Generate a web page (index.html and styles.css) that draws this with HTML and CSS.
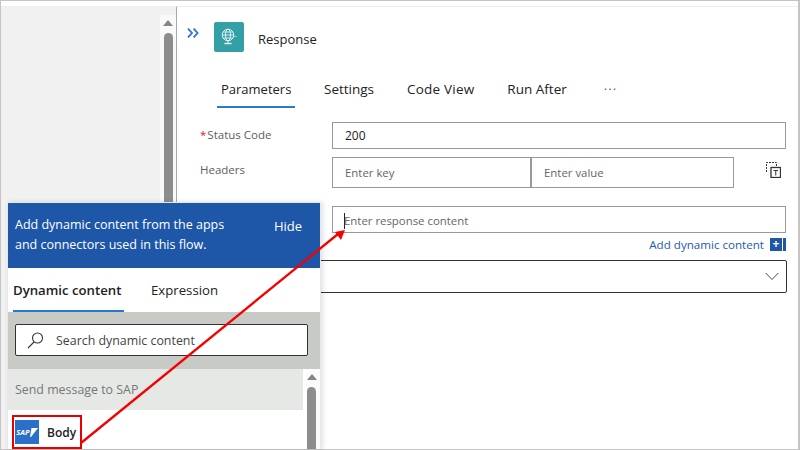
FILE: index.html
```html
<!DOCTYPE html>
<html lang="en">
<head>
	<meta charset="UTF-8">
	<title>Response</title>
	<link rel="stylesheet" href="styles.css">
</head>
<body>
	<div class="frame">
		<div class="sidebar">
			<div class="scroll_strip">
				<div class="scroll_up"></div>
				<div class="scroll_thumb"></div>
			</div>
		</div>

		<div class="main">
			<div class="head">
				<svg class="collapse" width="12" height="10" viewBox="0 0 12 10"><path d="M1 .6 5 5 1 9.400M6.600 .6 10.600 5 6.600 9.400" fill="none" stroke="#2f6fe0" stroke-width="1.800"/></svg>
				<div class="action_icon">
					<svg width="18" height="18" viewBox="0 0 18 18" fill="none" stroke="#fff" stroke-width=".8">
						<circle cx="8" cy="7" r="5.800"/>
						<ellipse cx="8" cy="7" rx="2.500" ry="5.800"/>
						<path d="M2.200 7h11.600M3 4h10M3 10h10M8 13v2"/>
						<path d="M4.500 15.500h7" stroke-width="1.400"/>
						<path d="M13.500 8.500h3" opacity=".6"/>
					</svg>
				</div>
				<span class="action_title">Response</span>
			</div>

			<ul class="tabs">
				<li class="tab tab_on">Parameters</li>
				<li class="tab">Settings</li>
				<li class="tab tab_code">Code View</li>
				<li class="tab">Run After</li>
				<li class="tab tab_more">···</li>
			</ul>

			<div class="row row_status">
				<label class="label"><span class="req">*</span>Status Code</label>
				<div class="field field_value">200</div>
			</div>
			<div class="row row_headers">
				<label class="label">Headers</label>
				<div class="pair">
					<div class="field pair_key">Enter key</div>
					<div class="field pair_val">Enter value</div>
				</div>
				<svg class="switch_icon" width="15" height="16" viewBox="0 0 15 16" fill="none" stroke="#333">
					<path d="M.5 10V.5H10.500V5" stroke-dasharray="2 1"/>
					<rect x="5" y="5.500" width="9.500" height="10" fill="#fff" stroke-width="1.300"/>
					<path d="M7.500 8.500h4.500M9.750 8.500v5"/>
				</svg>
			</div>
			<div class="row row_body">
				<div class="label"></div>
				<div class="field field_body"><span class="caret"></span>Enter response content</div>
			</div>
			<div class="add_dynamic">
				<span>Add dynamic content</span>
				<span class="add_plus">+</span>
				<span class="add_bar"></span>
			</div>
			<div class="dropdown">
				<svg width="14" height="9" viewBox="0 0 14 9"><path d="M.7 1 7 7.500 13.300 1" fill="none" stroke="#444" stroke-width="1"/></svg>
			</div>
		</div>
	</div>

	<div class="dyn_panel">
		<div class="dyn_head">
			<p>Add dynamic content from the apps and connectors used in this flow.</p>
			<span class="dyn_hide">Hide</span>
		</div>
		<div class="dyn_tabs">
			<span class="dyn_tab dyn_tab_on">Dynamic content</span>
			<span class="dyn_tab">Expression</span>
		</div>
		<div class="dyn_search">
			<div class="search_box">
				<svg width="17" height="17" viewBox="0 0 17 17" fill="none" stroke="#333" stroke-width="1.100"><circle cx="10.500" cy="6" r="5"/><path d="M7 10 1 16"/></svg>
				<span>Search dynamic content</span>
			</div>
		</div>
		<div class="dyn_list">
			<div class="dyn_items">
				<div class="dyn_section">Send message to SAP</div>
				<div class="dyn_item">
					<div class="sap_icon">
						<span>SAP</span>
						<svg width="8" height="9" viewBox="0 0 8 9"><path d="M1.500 0H8L1 9H0Z" fill="#fff"/></svg>
					</div>
					<b>Body</b>
				</div>
			</div>
			<div class="dyn_scroll">
				<div class="scroll_up"></div>
				<div class="scroll_thumb"></div>
			</div>
		</div>
	</div>

	<!-- callout over the screenshot -->
	<div class="callout_box"></div>
	<svg class="callout_arrow" width="800" height="450" viewBox="0 0 800 450">
		<path d="M81 443 338 234" stroke="#f50000" stroke-width="2.300" fill="none"/>
		<path d="M345 230 335 232 341 240Z" fill="#f50000"/>
	</svg>
</body>
</html>
```

FILE: styles.css
```css
*{
	margin: 0;
	padding: 0;
	box-sizing: border-box;
}
html,body{
	width: 800px;
	height: 450px;
	overflow: hidden;
	background: #fff;
}
body{
	font-family: "Open Sans", "Noto Sans", sans-serif;
	font-size: 12px;
	color: #222;
	position: relative;
}
ul{
	list-style: none;
}

.frame{
	width: 800px;
	height: 450px;
	border: 1px solid #c4c4c4;
	border-width: 1px 2px 1px 1px;
	display: flex;
}

/* left column */
.sidebar{
	width: 176px;
	margin-top: 5px;
	background: #f1f1f1;
	border-right: 1px solid #a9a9a9;
	border-top: 1px solid #eee;
	padding-top: 8px;
	display: flex;
	justify-content: flex-end;
}
.scroll_strip{
	width: 16px;
	background: #f9f9f9;
	padding: 5px 3px 0;
	display: flex;
	flex-direction: column;
}
.scroll_up{
	width: 0;
	height: 0;
	margin: 0 auto;
	flex: none;
	border-left: 5px solid transparent;
	border-right: 5px solid transparent;
	border-bottom: 6px solid #858585;
}
.scroll_thumb{
	width: 9px;
	flex: 1;
	margin: 7px auto 0;
	background: #8c8c8c;
	border-radius: 5px 5px 0 0;
}

/* right column */
.main{
	flex: 1;
	margin-top: 5px;
	border-top: 1px solid #f0f0f0;
	padding-top: 15px;
}
.head{
	display: flex;
	height: 30px;
	padding-left: 10px;
}
.collapse{
	margin-top: 6px;
}
.action_icon{
	width: 30px;
	height: 30px;
	margin-left: 15px;
	background: #33a0a5;
	border-radius: 2px;
	display: flex;
	align-items: center;
	justify-content: center;
}
.action_title{
	margin-left: 14px;
	font-size: 13px;
	line-height: 34px;
	color: #222;
}
.tabs{
	display: flex;
	margin: 18px 0 0 40px;
	font-size: 13.500px;
	height: 38px;
}
.tab{
	padding: 9px 4px 0;
	margin-right: 25px;
	line-height: 20px;
}
.tab_on{
	width: 78px;
	font-size: 13px;
	border-bottom: 2px solid #2b78d0;
}
.tab_code{
	letter-spacing: .2px;
}
.tab_more{
	margin-left: 4px;
	color: #666;
	letter-spacing: 1px;
}

.row{
	display: flex;
	padding-left: 23px;
}
.label{
	width: 132px;
	flex: none;
	color: #605e5c;
	font-size: 11.500px;
	line-height: 18px;
}
.req{
	color: #e81123;
	margin-right: 1px;
}
.field{
	border: 1px solid #999;
	color: #666;
	font-size: 11.400px;
	padding-left: 12px;
	display: flex;
	align-items: center;
}
.row_status{
	margin-top: 14px;
}
.field_value{
	width: 454px;
	height: 27px;
	color: #222;
	font-size: 12px;
}
.row_headers{
	margin-top: 8px;
}
.row_headers .label{
	padding-top: 4px;
}
.row_status .label{
	padding-top: 4px;
}
.pair{
	display: flex;
	width: 402px;
	height: 31px;
}
.pair_key{
	width: 198px;
	border-right: 0;
}
.pair_val{
	flex: 1;
	border-left-width: 2px;
}
.switch_icon{
	margin: 5px 0 0 32px;
}
.row_body{
	margin-top: 18px;
}
.field_body{
	width: 454px;
	height: 27px;
	padding: 2px 0 0 11px;
}
.caret{
	width: 1px;
	height: 16px;
	background: #222;
	margin-right: -1px;
}
.add_dynamic{
	display: flex;
	justify-content: flex-end;
	align-items: center;
	width: 609px;
	height: 14px;
	margin-top: 4px;
	color: #2559b5;
	font-size: 11.600px;
}
.add_plus{
	width: 12px;
	height: 13px;
	margin-left: 6px;
	background: #1e56a8;
	color: #fff;
	font-size: 12px;
	font-weight: 700;
	line-height: 12px;
	text-align: center;
}
.add_bar{
	width: 3px;
	height: 13px;
	margin-left: 1px;
	background: #1e56a8;
}
.dropdown{
	width: 587px;
	height: 33px;
	margin: 9px 0 0 23px;
	border: 1px solid #333;
	border-radius: 2px;
	display: flex;
	align-items: center;
	justify-content: flex-end;
	padding-right: 7px;
}

/* dynamic content popup, sits over the form */
.dyn_panel{
	position: absolute;
	left: 7px;
	top: 202px;
	width: 314px;
	height: 247px;
	background: #fff;
	border: 1px solid #e8e8e8;
	border-bottom: 0;
	box-shadow: 2px 0 5px rgba(0,0,0,.12);
	overflow: hidden;
	display: flex;
	flex-direction: column;
}
.dyn_head{
	height: 65px;
	flex: none;
	background: #1e56a8;
	color: #fff;
	font-size: 12.500px;
	line-height: 20px;
	padding: 12px 18px 0 7px;
	display: flex;
	justify-content: space-between;
}
.dyn_head p{
	width: 215px;
}
.dyn_hide{
	font-size: 13px;
	margin-top: 1px;
}
.dyn_tabs{
	display: flex;
	flex: none;
	height: 44px;
	padding-left: 5px;
	font-size: 13.200px;
}
.dyn_tab{
	line-height: 44px;
	margin-right: 27px;
}
.dyn_tab_on{
	font-weight: 600;
	border-bottom: 2px solid #2b78d0;
	height: 44px;
	width: 111px;
}
.dyn_search{
	height: 57px;
	flex: none;
	background: #c8cac6;
	padding: 12px 12px 0 7px;
}
.search_box{
	height: 32px;
	background: #fff;
	border: 1px solid #333;
	border-radius: 2px;
	display: flex;
	align-items: center;
	padding-left: 11px;
	color: #444;
	font-size: 12.400px;
}
.search_box span{
	margin-left: 12px;
}
.dyn_list{
	display: flex;
	flex: 1;
	min-height: 0;
}
.dyn_items{
	width: 295px;
}
.dyn_section{
	height: 41px;
	background: #e6e8e5;
	padding-left: 7px;
	line-height: 41px;
	color: #777;
	font-size: 12.400px;
}
.dyn_item{
	display: flex;
	align-items: center;
	padding: 10px 0 0 7px;
	font-size: 12px;
}
.dyn_item b{
	font-weight: 600;
	margin-left: 8px;
}
.sap_icon{
	width: 24px;
	height: 24px;
	background: #2b70c8;
	display: flex;
	align-items: center;
	justify-content: center;
	color: #fff;
	font-size: 7.500px;
	font-weight: 700;
	font-style: italic;
}
.dyn_scroll{
	flex: 1;
	margin-left: 3px;
	padding-top: 5px;
	background: #fbfbfb;
	display: flex;
	flex-direction: column;
}
.dyn_scroll .scroll_thumb{
	margin: 7px 0 0 1px;
}
.dyn_scroll .scroll_up{
	margin: 0 0 0 1px;
}

/* red callout */
.callout_box{
	position: absolute;
	left: 12px;
	top: 415px;
	width: 70px;
	height: 34px;
	border: 2px solid #e60000;
}
.callout_arrow{
	position: absolute;
	left: 0;
	top: 0;
}
```
